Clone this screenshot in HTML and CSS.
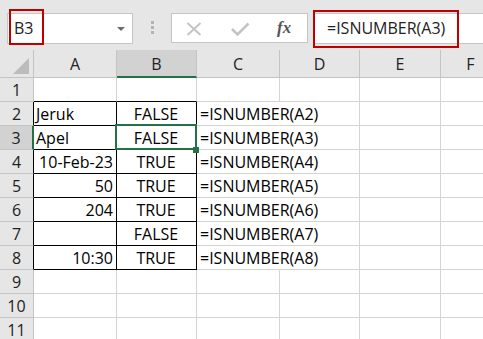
FILE: index.html
```html
<!DOCTYPE html>
<html>
<head>
<meta charset="utf-8">
<link rel="stylesheet" href="styles.css">
</head>
<body>
<div class="toolbar">
  <div class="namebox">
    <span class="name">B3</span>
    <svg class="dd" width="8" height="5" viewBox="0 0 8 5"><polygon points="0,0 8,0 4,4" fill="#6a6a6a"/></svg>
    <div class="mark mark-name"></div>
  </div>
  <div class="grip"><i></i><i></i><i></i></div>
  <div class="fnbox">
    <svg class="ico-x" width="16" height="14" viewBox="0 0 16 14"><path d="M1.5 1 L14.5 13 M14.5 1 L1.5 13" stroke="#c4c4c4" stroke-width="2" fill="none"/></svg>
    <svg class="ico-ok" width="19" height="14" viewBox="0 0 19 14"><path d="M1 7 L6.5 12.5 L17.5 1.5" stroke="#c4c4c4" stroke-width="2.6" fill="none"/></svg>
    <span class="fx">fx</span>
  </div>
  <div class="formula">
    <span class="ftext">=ISNUMBER(A3)</span>
    <div class="mark mark-formula"></div>
  </div>
</div>
<div class="sheet">
  <div class="h corner"><svg width="17" height="17" viewBox="0 0 17 17"><polygon points="16,0 16,16 0,16" fill="#bcbcbc"/></svg></div>
  <div class="h col">A</div>
  <div class="h col hsel">B</div>
  <div class="h col">C</div>
  <div class="h col">D</div>
  <div class="h col">E</div>
  <div class="h col">F</div>

  <div class="h row">1</div>
  <div class="c bt"></div><div class="c bt"></div><div class="c"></div><div class="c"></div><div class="c"></div><div class="c"></div>

  <div class="h row bl">2</div>
  <div class="c bx">Jeruk</div><div class="c bx ctr">FALSE</div><div class="c spill">=ISNUMBER(A2)</div><div class="c"></div><div class="c"></div><div class="c"></div>

  <div class="h row rsel">3</div>
  <div class="c bx">Apel</div><div class="c bx ctr active">FALSE</div><div class="c spill">=ISNUMBER(A3)</div><div class="c"></div><div class="c"></div><div class="c"></div>

  <div class="h row bl">4</div>
  <div class="c bx num">10-Feb-23</div><div class="c bx ctr">TRUE</div><div class="c spill">=ISNUMBER(A4)</div><div class="c"></div><div class="c"></div><div class="c"></div>

  <div class="h row bl">5</div>
  <div class="c bx num">50</div><div class="c bx ctr">TRUE</div><div class="c spill">=ISNUMBER(A5)</div><div class="c"></div><div class="c"></div><div class="c"></div>

  <div class="h row bl">6</div>
  <div class="c bx num">204</div><div class="c bx ctr">TRUE</div><div class="c spill">=ISNUMBER(A6)</div><div class="c"></div><div class="c"></div><div class="c"></div>

  <div class="h row bl">7</div>
  <div class="c bx"></div><div class="c bx ctr">FALSE</div><div class="c spill">=ISNUMBER(A7)</div><div class="c"></div><div class="c"></div><div class="c"></div>

  <div class="h row bl">8</div>
  <div class="c bx num">10:30</div><div class="c bx ctr">TRUE</div><div class="c spill">=ISNUMBER(A8)</div><div class="c"></div><div class="c"></div><div class="c"></div>

  <div class="h row">9</div>
  <div class="c"></div><div class="c"></div><div class="c"></div><div class="c"></div><div class="c"></div><div class="c"></div>

  <div class="h row">10</div>
  <div class="c"></div><div class="c"></div><div class="c"></div><div class="c"></div><div class="c"></div><div class="c"></div>

  <div class="h row">11</div>
  <div class="c"></div><div class="c"></div><div class="c"></div><div class="c"></div><div class="c"></div><div class="c"></div>
</div>
</body>
</html>
```
FILE: styles.css
```css
html, body {
  margin: 0;
  padding: 0;
  background: #ffffff;
  overflow: hidden;
}
body {
  font-family: "Open Sans", "Liberation Sans", sans-serif;
  font-size: 16px;
  color: #000;
  width: 483px;
  height: 339px;
}
.toolbar {
  height: 50px;
  background: #e6e6e6;
  display: flex;
  align-items: flex-start;
  padding-top: 13px;
  box-sizing: border-box;
}
.namebox {
  position: relative;
  margin-left: 7px;
  width: 126px;
  height: 31px;
  box-sizing: border-box;
  background: #fff;
  border: 1px solid #c6c6c6;
  display: flex;
  align-items: center;
  justify-content: space-between;
  padding: 0 7px 0 6px;
}
.name {
  font-size: 16px;
  line-height: 29px;
  color: #222;
}
.dd { margin-top: 1px; }
.mark {
  position: absolute;
  border: 2px solid #c00000;
  box-sizing: border-box;
}
.mark-name {
  left: 1px;
  top: -5px;
  width: 35px;
  height: 36px;
}
.grip {
  width: 38px;
  height: 30px;
  display: flex;
  flex-direction: column;
  align-items: center;
  gap: 2px;
  padding-top: 8px;
  box-sizing: border-box;
}
.grip i {
  display: block;
  width: 3px;
  height: 3px;
  background: #b4b4b4;
}
.fnbox {
  width: 137px;
  height: 30px;
  box-sizing: border-box;
  background: #fff;
  border: 1px solid #c6c6c6;
  display: flex;
  align-items: center;
  padding-left: 14px;
}
.ico-x { margin-top: 1px; }
.ico-ok { margin-left: 29px; margin-top: 1px; }
.fx {
  margin-left: 27px;
  font-family: "Liberation Serif", serif;
  font-style: italic;
  font-weight: bold;
  font-size: 17px;
  color: #555;
  line-height: 28px;
}
.formula {
  position: relative;
  margin-left: 5px;
  flex: 1;
  height: 31px;
  box-sizing: border-box;
  background: #fff;
  border: 1px solid #c6c6c6;
  border-right: none;
  padding-left: 13px;
  line-height: 29px;
}
.ftext { color: #222; }
.mark-formula {
  left: -1px;
  top: -4px;
  width: 146px;
  height: 38px;
}
.sheet {
  display: grid;
  grid-template-columns: 34px 83px 80px 83px 80px 81px 60px;
  grid-template-rows: 28px repeat(11, 24px);
}
.h {
  background: #e6e6e6;
  box-sizing: border-box;
  border-right: 1px solid #c4c4c4;
  border-bottom: 1px solid #c4c4c4;
  color: #222;
  text-align: center;
  line-height: 26px;
}
.corner {
  display: flex;
  align-items: flex-end;
  justify-content: flex-end;
  padding: 0 3px 2px 0;
}
.col { padding-top: 1px; }
.hsel {
  background: #d2d2d2;
  border-bottom: 2px solid #217346;
}
.row {
  line-height: 23px;
  padding-top: 1px;
  background: #e6e6e6;
}
.rsel {
  background: #d2d2d2;
  border-right: 2px solid #217346;
}
.bl { border-right-color: #000; }
.c {
  box-sizing: border-box;
  border-right: 1px solid #d4d4d4;
  border-bottom: 1px solid #d4d4d4;
  line-height: 23px;
  padding: 1px 3px 0 2px;
  white-space: nowrap;
  overflow: visible;
}
.spill {
  border-right-color: transparent;
  padding-left: 3px;
}
.bt { border-bottom-color: #000; }
.bx {
  border-right-color: #000;
  border-bottom-color: #000;
}
.ctr { text-align: center; }
.num { text-align: right; }
.active { position: relative; }
.active::after {
  content: "";
  position: absolute;
  left: -2px;
  top: -2px;
  right: -1px;
  bottom: -1px;
  border: 2px solid #217346;
}
.active::before {
  content: "";
  position: absolute;
  right: -3px;
  bottom: -4px;
  width: 6px;
  height: 6px;
  background: #217346;
  z-index: 2;
}
```
